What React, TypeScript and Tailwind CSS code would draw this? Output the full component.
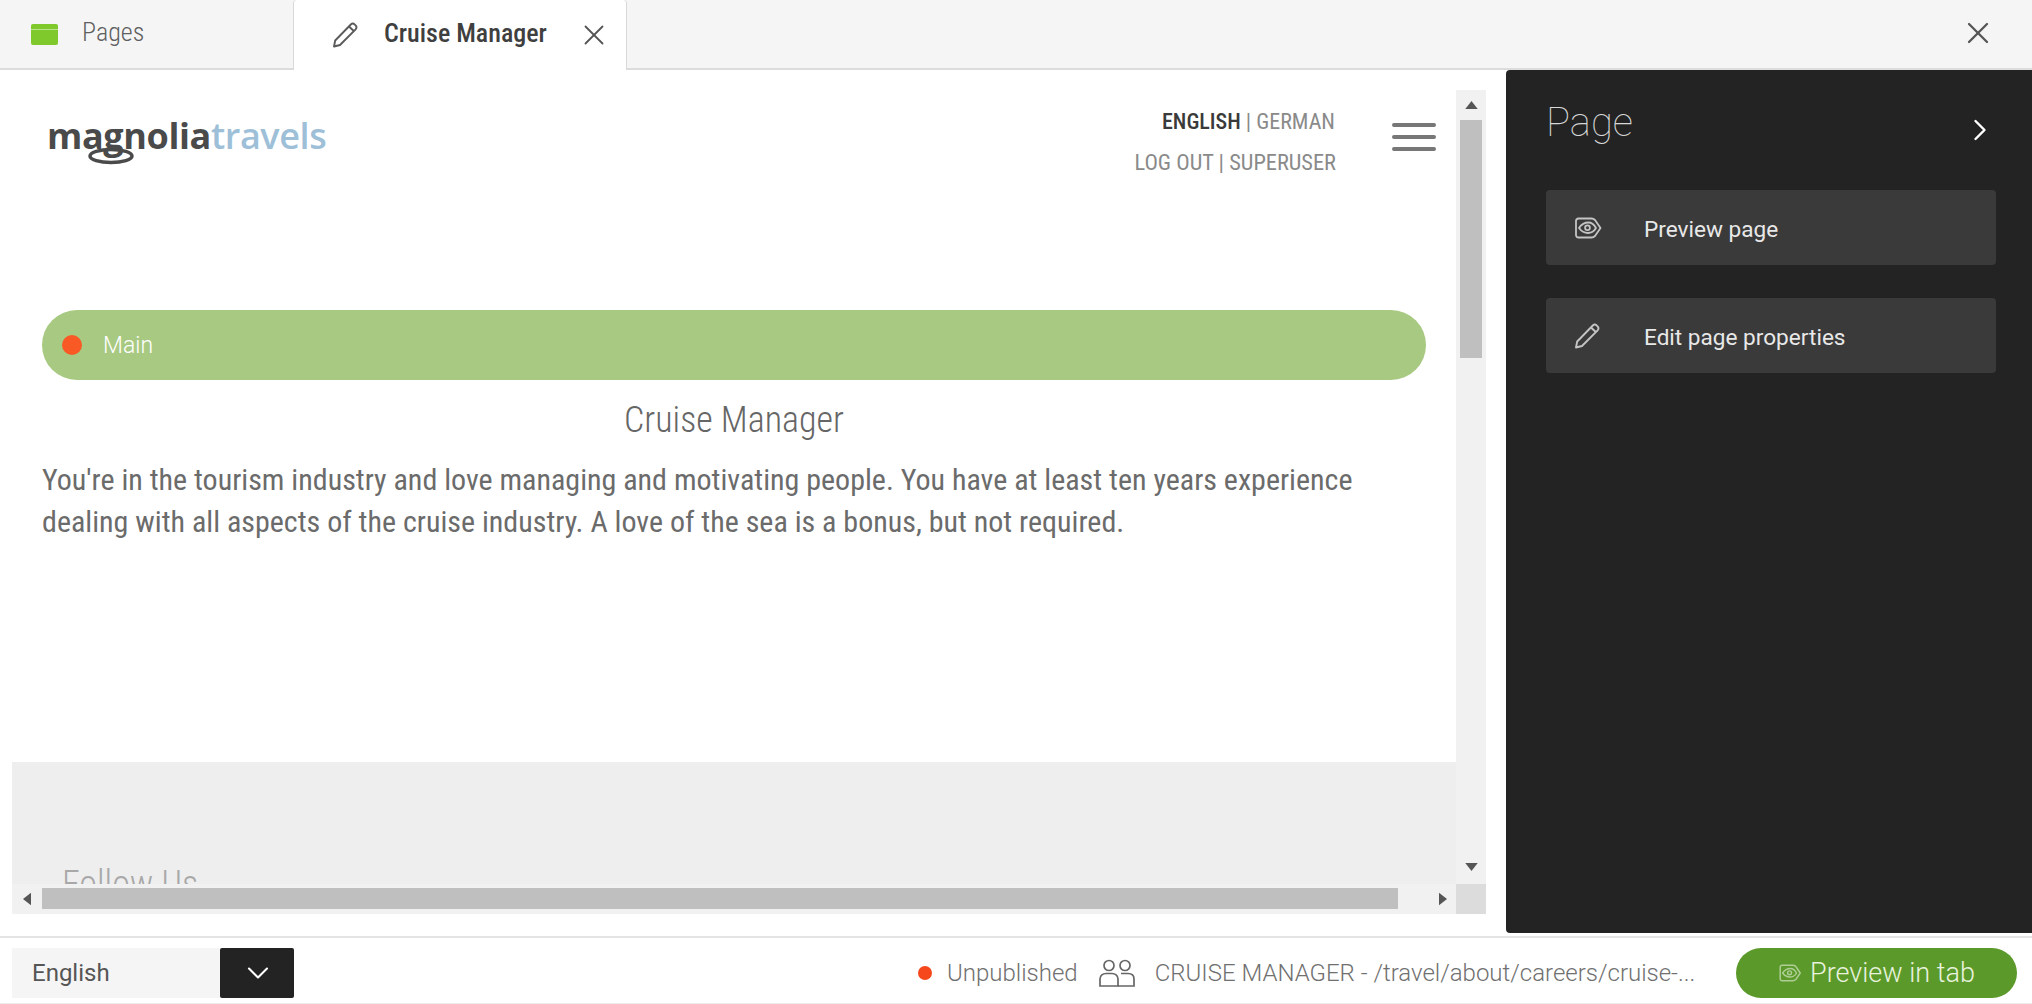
import { X, ChevronRight, ChevronDown } from "lucide-react";

function PencilIcon({ className }: { className?: string }) {
  return (
    <svg viewBox="0 0 26 26" fill="none" stroke="currentColor" strokeWidth="1.9" strokeLinejoin="round" className={className}>
      <path d="M2 24.5 L3.2 18.5 L18.8 2.5 C20 1.4 21.6 1.4 22.8 2.6 L23.6 3.4 C24.7 4.6 24.7 6.1 23.6 7.3 L8 23 Z" />
      <path d="M17 4.5 L21.8 9" />
    </svg>
  );
}

function TagEyeIcon({ className }: { className?: string }) {
  return (
    <svg viewBox="0 0 28 22" fill="none" stroke="currentColor" strokeWidth="1.8" strokeLinejoin="round" className={className}>
      <path d="M2 4 C2 2.6 3 1.5 4.5 1.5 L17.5 1.5 C19 1.5 20 2 21 3 L26.5 11 L21 19 C20 20 19 20.5 17.5 20.5 L4.5 20.5 C3 20.5 2 19.4 2 18 Z" />
      <path d="M5 11 C8 6.5 12 5.5 14.5 5.5 C17 5.5 20 7.5 22 11 C20 14.5 17 16 14 16 C11 16 8 15 5 11 Z" />
      <circle cx="13.5" cy="10.8" r="2.4" />
    </svg>
  );
}

function UsersIcon({ className }: { className?: string }) {
  return (
    <svg viewBox="0 0 38 28" fill="none" stroke="currentColor" strokeWidth="1.7" className={className}>
      <circle cx="11" cy="6.5" r="5" />
      <circle cx="27" cy="6.5" r="5" />
      <path d="M2 27 L2 20 C2 16.5 5 14.5 8 14.5 L14 14.5 C17 14.5 20 16.5 20 20 L20 27 Z" />
      <path d="M23 14.5 L30 14.5 C33.5 14.5 36 16.5 36 20 L36 27 L20 27" />
    </svg>
  );
}

function Triangle({ dir }: { dir: "up" | "down" | "left" | "right" }) {
  const points = {
    up: "7,0 14,9 0,9",
    down: "0,0 14,0 7,9",
    left: "9,0 9,14 0,7",
    right: "0,0 9,7 0,14",
  }[dir];
  const vertical = dir === "up" || dir === "down";
  return (
    <svg viewBox={vertical ? "0 0 14 9" : "0 0 9 14"} className={vertical ? "h-[8px] w-[15px]" : "h-[14px] w-[8px]"} fill="#555">
      <polygon points={points} />
    </svg>
  );
}

function Logo() {
  return (
    <div className="relative -mt-[3px] h-[46px] w-[290px]">
      <div className="flex text-[36px] leading-[40px] font-bold tracking-[-0.4px] font-['Open_Sans',sans-serif]">
        <span className="text-[#4a4a4a]">magnolia</span>
        <span className="font-semibold text-[#9dc0d8]">travels</span>
      </div>
      <svg viewBox="0 0 50 20" className="absolute left-[39px] top-[29px] h-[20px] w-[50px]" fill="none" stroke="#4a4a4a" strokeWidth="3.5">
        <ellipse cx="25" cy="11" rx="21" ry="6.5" />
      </svg>
    </div>
  );
}

function ActionButton({ icon, label }: { icon: React.ReactNode; label: string }) {
  return (
    <div className="flex h-[75px] items-center rounded-[4px] bg-[#3a3a3a]">
      <div className="flex w-[98px] shrink-0 pl-[28px] text-[#c4c4c4]">{icon}</div>
      <span className="mt-[5px] text-[22.6px] text-[#e8e8e8]">{label}</span>
    </div>
  );
}

export default function App() {
  return (
    <div className="flex h-screen w-full flex-col overflow-hidden bg-white font-['Roboto',sans-serif]">
      {/* tab bar */}
      <div className="flex h-[70px] items-stretch border-b-2 border-[#dcdcdc] bg-[#f5f5f5]">
        <div className="flex w-[293px] items-center pl-[31px]">
          <div className="flex h-[21px] w-[27px] flex-col overflow-hidden rounded-[2px] bg-[#7fc92c]">
            <div className="mt-[5px] h-px bg-[#b9e48a]" />
          </div>
          <span className="-mt-[4px] ml-[24px] text-[26px] font-light text-[#5f5f5f] [font-stretch:85%]">Pages</span>
        </div>
        <div className="-mb-[2px] flex w-[334px] items-center rounded-t-[4px] border-x border-[#d8d8d8] bg-white pl-[38px]">
          <PencilIcon className="h-[26px] w-[26px] text-[#5a5a5a]" />
          <span className="-mt-[4px] ml-[26px] text-[26px] font-medium text-[#3f3f3f] [font-stretch:85%]">Cruise Manager</span>
          <X className="ml-[30px] h-[34px] w-[34px] text-[#555]" strokeWidth={1.3} />
        </div>
        <div className="flex flex-1 items-center justify-end pr-[36px]">
          <X className="-mt-[2px] h-[36px] w-[36px] text-[#555]" strokeWidth={1.5} />
        </div>
      </div>

      {/* main */}
      <div className="flex flex-1 overflow-hidden">
        <div className="w-[1506px] pl-[12px] pt-[20px]">
          <div className="flex h-[824px] w-[1474px] flex-col">
            <div className="flex min-h-0 flex-1">
              <div className="flex w-[1444px] flex-col overflow-hidden">
                <div className="flex h-[220px] shrink-0 justify-between pl-[35px] pr-[20px] pt-[29px]">
                  <Logo />
                  <div className="flex">
                    <div className="flex flex-col items-end text-[22px] leading-[41px] text-[#8a8a8a] [font-stretch:80%]">
                      <div className="-mt-[18px]">
                        <span className="font-medium text-[#3a3a3a]">ENGLISH</span> | GERMAN
                      </div>
                      <div className="-mr-px text-[22.4px]">LOG OUT | SUPERUSER</div>
                    </div>
                    <div className="ml-[57px] mt-[4px] flex w-[44px] flex-col gap-[8px]">
                      <div className="h-[4px] rounded-full bg-[#777]" />
                      <div className="h-[4px] rounded-full bg-[#777]" />
                      <div className="h-[4px] rounded-full bg-[#777]" />
                    </div>
                  </div>
                </div>
                <div className="mx-[30px] flex h-[70px] shrink-0 items-center rounded-full bg-[#a8c981]">
                  <div className="ml-[20px] h-[20px] w-[20px] rounded-full bg-[#f95a25]" />
                  <span className="ml-[21px] mt-[2px] text-[23px] font-light text-white">Main</span>
                </div>
                <h1 className="mt-[19px] text-center text-[36px] font-light leading-[43px] text-[#666] [font-stretch:80%]">Cruise Manager</h1>
                <p className="mx-[30px] mt-[17px] text-[30px] leading-[42px] text-[#6b6b6b] [font-stretch:80%]">
                  You're in the tourism industry and love managing and motivating people. You have at least ten years experience
                  <br />
                  dealing with all aspects of the cruise industry. A love of the sea is a bonus, but not required.
                </p>
                <div className="mt-[219px] flex-1 bg-[#eeeeee] pl-[50px] pt-[101px]">
                  <div className="text-[36px] font-light leading-[43px] text-[#a8a8a8] [font-stretch:80%]">Follow Us</div>
                </div>
              </div>
              {/* vertical scrollbar */}
              <div className="flex w-[30px] flex-col items-center bg-[#f1f1f1]">
                <div className="flex h-[30px] items-center justify-center">
                  <Triangle dir="up" />
                </div>
                <div className="h-[238px] w-[22px] bg-[#bfbfbf]" />
                <div className="flex-1" />
                <div className="flex h-[34px] items-center justify-center">
                  <Triangle dir="down" />
                </div>
              </div>
            </div>
            {/* horizontal scrollbar */}
            <div className="flex h-[30px] shrink-0 bg-[#f1f1f1]">
              <div className="flex w-[30px] items-center justify-center">
                <Triangle dir="left" />
              </div>
              <div className="mb-[5px] mt-[4px] w-[1356px] bg-[#bfbfbf]" />
              <div className="flex flex-1 items-center justify-end pr-[9px]">
                <Triangle dir="right" />
              </div>
              <div className="w-[30px] bg-[#dcdcdc]" />
            </div>
          </div>
        </div>

        {/* right panel */}
        <div className="mb-[3px] flex flex-1 flex-col rounded-l-[4px] bg-[#232323] pl-[40px] pr-[36px]">
          <div className="flex h-[120px] items-start justify-between">
            <span className="mt-[29px] text-[40px] font-thin leading-[48px] text-[#d8d8d8]">Page</span>
            <ChevronRight className="-mr-[2px] mt-[42px] h-[36px] w-[36px] text-white" strokeWidth={1.6} />
          </div>
          <div className="flex flex-col gap-[33px]">
            <ActionButton icon={<TagEyeIcon className="h-[22px] w-[28px]" />} label="Preview page" />
            <ActionButton icon={<PencilIcon className="h-[26px] w-[26px]" />} label="Edit page properties" />
          </div>
        </div>
      </div>

      {/* bottom bar */}
      <div className="flex h-[68px] items-start border-b border-[#ececec] border-t-2 border-t-[#e4e4e4] pt-[10px]">
        <div className="ml-[12px] flex h-[50px] w-[208px] items-center bg-[#f5f5f5] pl-[20px] text-[24px] text-[#555]">English</div>
        <div className="flex h-[50px] w-[74px] items-center justify-center rounded-[2px] bg-[#232323] pl-[2px]">
          <ChevronDown className="h-[36px] w-[36px] text-white" strokeWidth={1.4} />
        </div>
        <div className="flex h-[50px] flex-1 items-center pl-[624px] pr-[15px]">
          <div className="h-[14px] w-[14px] rounded-full bg-[#f5471b]" />
          <span className="ml-[15px] text-[24px] font-light text-[#707070]">Unpublished</span>
          <UsersIcon className="ml-[20px] h-[28px] w-[38px] text-[#666]" />
          <span className="ml-[19px] whitespace-nowrap text-[24px] font-light text-[#707070]">CRUISE MANAGER - /travel/about/careers/cruise-...</span>
          <div className="ml-auto flex h-[50px] w-[281px] shrink-0 items-center justify-center rounded-full bg-[#5b9a2a] text-[#e8f2de]">
            <TagEyeIcon className="h-[18px] w-[24px] opacity-60" />
            <span className="ml-[8px] text-[27px] font-light">Preview in tab</span>
          </div>
        </div>
      </div>
    </div>
  );
}
